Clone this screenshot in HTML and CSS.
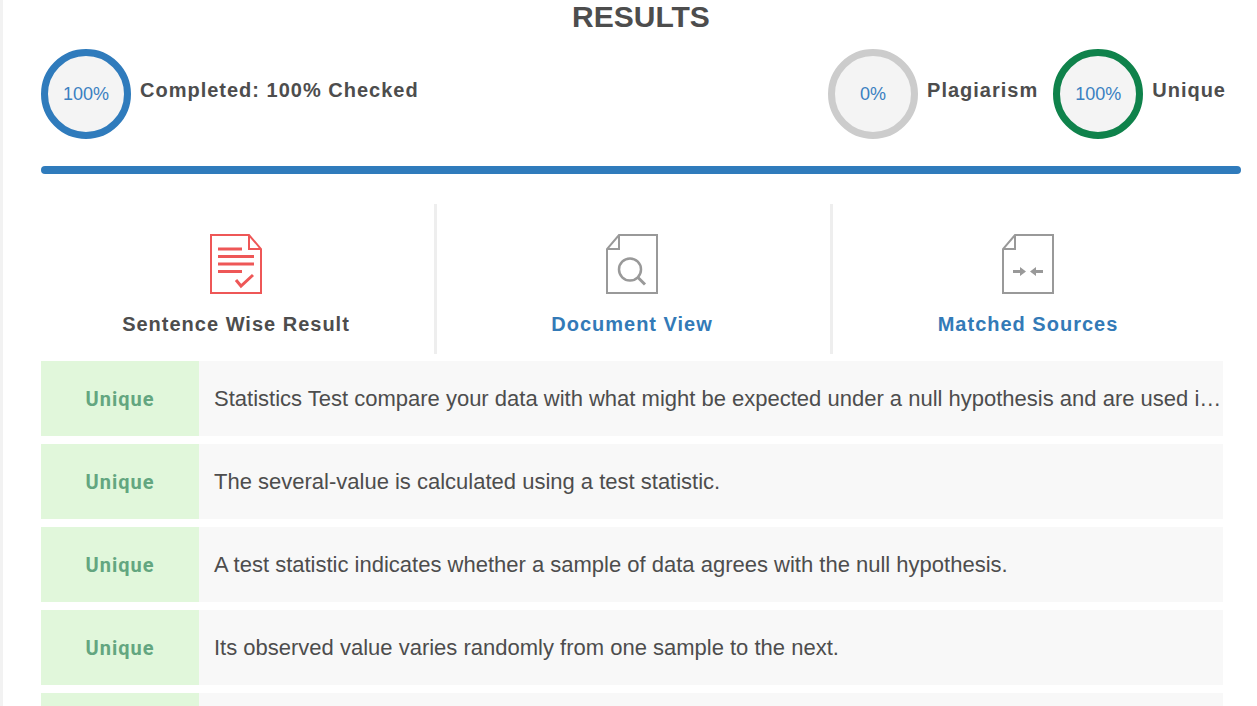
FILE: index.html
```
<!DOCTYPE html>
<html lang="en">
<head>
  <meta charset="UTF-8" />
  <meta name="viewport" content="width=device-width, initial-scale=1" />
  <title>Plagiarism Checker - Results</title>
  <link rel="stylesheet" href="styles.css">
</head>
<body>
  <main class="results">
    <h1>RESULTS</h1>

    <div class="summary">
      <div class="stat">
        <span class="circle">100%</span>
        <span class="stat-label">Completed: 100% Checked</span>
      </div>
      <div class="stat stat-push">
        <span class="circle circle-plagiarism">0%</span>
        <span class="stat-label">Plagiarism</span>
      </div>
      <div class="stat">
        <span class="circle circle-unique">100%</span>
        <span class="stat-label">Unique</span>
      </div>
    </div>

    <div class="progress"></div>

    <nav class="tabs">
      <a class="tab active" href="#sentences">
        <svg class="tab-icon" width="52" height="60" viewBox="0 0 52 60" fill="none" stroke="currentColor" stroke-width="2">
          <path d="M1 1H39L51 15V59H1Z" />
          <path d="M39 1V15H51" />
          <path d="M8 15H32M8 22.500H44M8 30H44M8 37.500H32" stroke-width="3" />
          <path d="M26 46L31 52L43 41" stroke-width="3" />
        </svg>
        Sentence Wise Result
      </a>
      <a class="tab" href="#document">
        <svg class="tab-icon" width="52" height="60" viewBox="0 0 52 60" fill="none" stroke="currentColor" stroke-width="2">
          <path d="M13 1H51V59H1V15Z" />
          <path d="M13 1V15H1" />
          <circle cx="24" cy="35.500" r="11" stroke-width="2.500" />
          <path d="M31.500 43L39 50.500" stroke-width="3" />
        </svg>
        Document View
      </a>
      <a class="tab" href="#sources">
        <svg class="tab-icon" width="52" height="60" viewBox="0 0 52 60" fill="none" stroke="currentColor" stroke-width="2">
          <path d="M13 1H51V59H1V15Z" />
          <path d="M13 1V15H1" />
          <path d="M11 37.500H19M33 37.500H41" stroke-width="3" />
          <path d="M18 33L24 37.500L18 42ZM34 33L28 37.500L34 42Z" fill="currentColor" stroke="none" />
        </svg>
        Matched Sources
      </a>
    </nav>

    <ul class="sentences" id="sentences">
      <li class="sentence">
        <b class="status">Unique</b>
        <span class="text">Statistics Test compare your data with what might be expected under a null hypothesis and are used in order to</span>
      </li>
      <li class="sentence">
        <b class="status">Unique</b>
        <span class="text">The several-value is calculated using a test statistic.</span>
      </li>
      <li class="sentence">
        <b class="status">Unique</b>
        <span class="text">A test statistic indicates whether a sample of data agrees with the null hypothesis.</span>
      </li>
      <li class="sentence">
        <b class="status">Unique</b>
        <span class="text">Its observed value varies randomly from one sample to the next.</span>
      </li>
      <li class="sentence">
        <b class="status"></b>
        <span class="text"></span>
      </li>
    </ul>
  </main>
</body>
</html>
```
FILE: styles.css
```
* {
  box-sizing: border-box;
}
body {
  font-family: "Liberation Sans", Arial, sans-serif;
  font-size: 20px;
  line-height: 24px;
  letter-spacing: 1px;
  margin: 0;
  color: #4d4d4d;
  background: white;
  border-left: 3px solid #f2f2f2;
}
.results {
  padding: 0 16px 0 38px;
}
h1 {
  margin: 0 0 15px;
  font-size: 30px;
  line-height: 34px;
  letter-spacing: 0;
  text-align: center;
}

/* Percentage circles */
.summary {
  display: flex;
  flex-wrap: wrap;
}
.stat {
  display: flex;
  align-items: center;
  gap: 9px;
  margin-right: 15px;
}
.stat-push {
  margin-left: auto;
}
.stat-label {
  font-weight: 700;
  padding-bottom: 8px;
}
.circle {
  display: flex;
  align-items: center;
  justify-content: center;
  width: 90px;
  height: 90px;
  border: 7px solid #2f7bbc;
  border-radius: 50%;
  background: #f4f4f4;
  color: #3a80c1;
  font-size: 18px;
  letter-spacing: 0;
}
.circle-plagiarism {
  border-color: #cccccc;
}
.circle-unique {
  border-color: #0f824b;
}
.progress {
  height: 8px;
  margin: 27px 0 30px;
  border-radius: 4px;
  background: #2f7bbc;
}

/* Tabs */
.tabs {
  display: grid;
  grid-template-columns: repeat(3, 1fr);
  margin: 0 15px 7px -3px;
}
.tab {
  display: flex;
  flex-direction: column;
  align-items: center;
  gap: 18px;
  padding: 30px 0 18px;
  color: #337ab7;
  font-weight: 700;
  text-decoration: none;
}
.tab + .tab {
  padding-right: 3px;
  border-left: 3px solid #eeeeee;
}
.tab.active {
  color: #4d4d4d;
}
.tab-icon {
  color: #999999;
}
.tab.active .tab-icon {
  color: #ee5757;
}

/* Sentence list */
.sentences {
  display: flex;
  flex-direction: column;
  gap: 8px;
  list-style: none;
  margin: 0 18px 0 0;
  padding: 0;
}
.sentence {
  display: flex;
  align-items: center;
  min-height: 75px;
  background: #f8f8f8;
}
.status {
  display: flex;
  align-items: center;
  justify-content: center;
  align-self: stretch;
  flex: 0 0 158px;
  background: #e1f7db;
  color: #63a680;
  font-family: Roboto, sans-serif;
}
.text {
  flex: 1;
  padding-left: 15px;
  font-size: 22px;
  letter-spacing: 0;
  overflow: hidden;
  text-overflow: ellipsis;
  white-space: nowrap;
}
```
